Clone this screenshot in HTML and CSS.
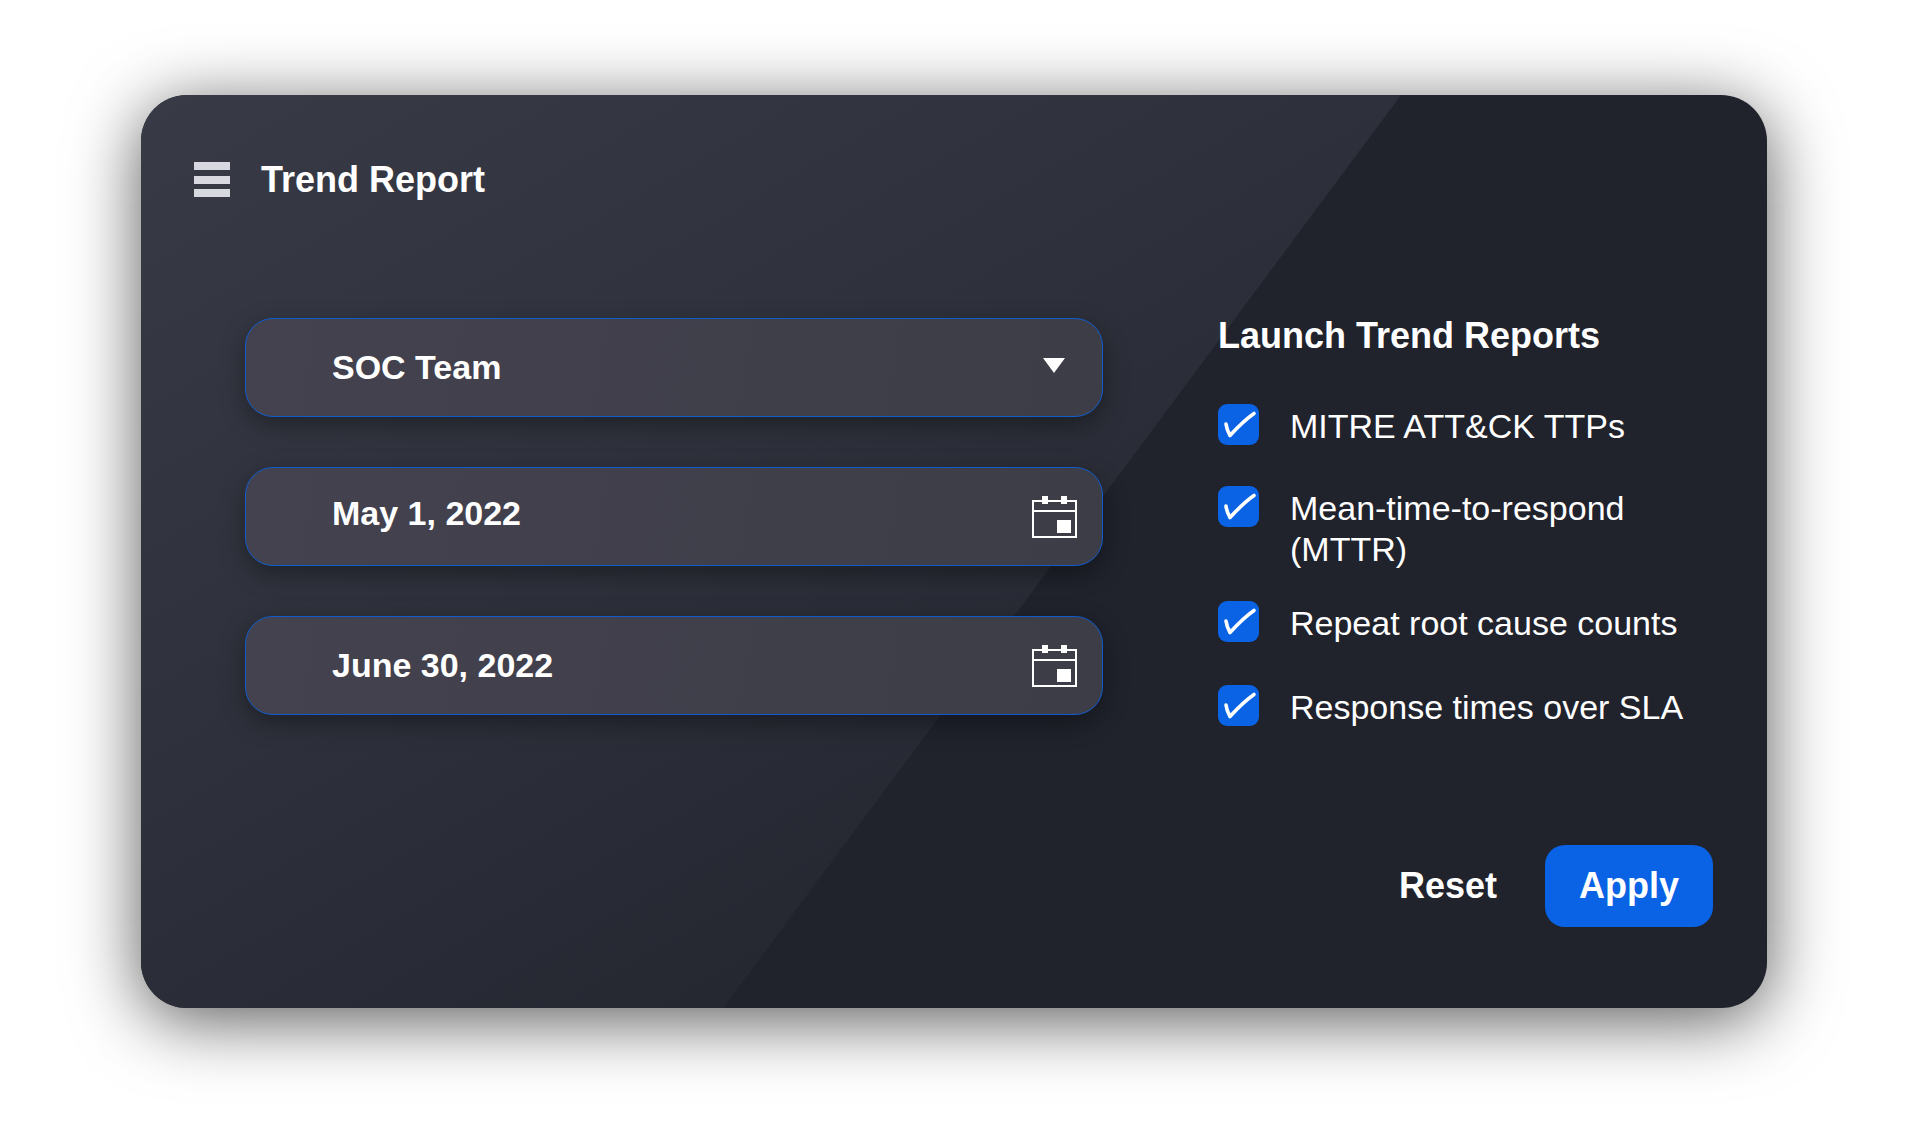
FILE: index.html
```html
<!DOCTYPE html>
<html>
<head>
    <meta charset="UTF-8">
    <title>Trend Report</title>
    <link rel="stylesheet" href="styles.css">
</head>
<body>
    <div class="card">
        <header class="card-header">
            <div class="menu-icon"><span></span><span></span><span></span></div>
            <h1>Trend Report</h1>
        </header>

        <div class="card-body">
            <div class="fields">
                <div class="field">
                    <span>SOC Team</span>
                    <span class="arrow"></span>
                </div>
                <div class="field">
                    <span class="raised">May 1, 2022</span>
                    <svg class="calendar" viewBox="0 0 45 42" width="45" height="42">
                        <rect x="1" y="5" width="43" height="36" fill="none" stroke="#fff" stroke-width="2"/>
                        <rect x="10" y="0" width="6" height="8" fill="#fff"/>
                        <rect x="29" y="0" width="6" height="8" fill="#fff"/>
                        <rect x="1" y="14" width="43" height="2" fill="#fff"/>
                        <rect x="25" y="24" width="14" height="13" fill="#fff"/>
                    </svg>
                </div>
                <div class="field">
                    <span>June 30, 2022</span>
                    <svg class="calendar" viewBox="0 0 45 42" width="45" height="42">
                        <rect x="1" y="5" width="43" height="36" fill="none" stroke="#fff" stroke-width="2"/>
                        <rect x="10" y="0" width="6" height="8" fill="#fff"/>
                        <rect x="29" y="0" width="6" height="8" fill="#fff"/>
                        <rect x="1" y="14" width="43" height="2" fill="#fff"/>
                        <rect x="25" y="24" width="14" height="13" fill="#fff"/>
                    </svg>
                </div>
            </div>

            <div class="reports">
                <h2>Launch Trend Reports</h2>
                <div class="check-row first">
                    <svg class="checkbox" viewBox="0 0 41 41" width="41" height="41">
                        <rect width="41" height="41" rx="9" fill="#0a62e4"/>
                        <path d="M8 20 C8.5 24 10 28 12 31.5 C18 25 28 15 36 9.5" fill="none" stroke="#fff" stroke-width="3.6" stroke-linecap="round" stroke-linejoin="round"/>
                    </svg>
                    <span>MITRE ATT&amp;CK TTPs</span>
                </div>
                <div class="check-row wrap">
                    <svg class="checkbox" viewBox="0 0 41 41" width="41" height="41">
                        <rect width="41" height="41" rx="9" fill="#0a62e4"/>
                        <path d="M8 20 C8.5 24 10 28 12 31.5 C18 25 28 15 36 9.5" fill="none" stroke="#fff" stroke-width="3.6" stroke-linecap="round" stroke-linejoin="round"/>
                    </svg>
                    <span>Mean-time-to-respond (MTTR)</span>
                </div>
                <div class="check-row">
                    <svg class="checkbox" viewBox="0 0 41 41" width="41" height="41">
                        <rect width="41" height="41" rx="9" fill="#0a62e4"/>
                        <path d="M8 20 C8.5 24 10 28 12 31.5 C18 25 28 15 36 9.5" fill="none" stroke="#fff" stroke-width="3.6" stroke-linecap="round" stroke-linejoin="round"/>
                    </svg>
                    <span>Repeat root cause counts</span>
                </div>
                <div class="check-row">
                    <svg class="checkbox" viewBox="0 0 41 41" width="41" height="41">
                        <rect width="41" height="41" rx="9" fill="#0a62e4"/>
                        <path d="M8 20 C8.5 24 10 28 12 31.5 C18 25 28 15 36 9.5" fill="none" stroke="#fff" stroke-width="3.6" stroke-linecap="round" stroke-linejoin="round"/>
                    </svg>
                    <span>Response times over SLA</span>
                </div>
            </div>
        </div>

        <footer class="card-footer">
            <button class="btn-reset">Reset</button>
            <button class="btn-apply">Apply</button>
        </footer>
    </div>
</body>
</html>
```

FILE: styles.css
```css
html, body {
    height: 100%;
}

body {
    box-sizing: border-box;
    margin: 0;
    padding: 95px 0 0 141px;
    background-color: #ffffff;
    color: #ffffff;
    font-family: "Liberation Sans", Arial, sans-serif;
}

.card {
    position: relative;
    box-sizing: border-box;
    display: flex;
    flex-direction: column;
    width: 1626px;
    height: 913px;
    padding: 67px 54px 81px 53px;
    border-radius: 46px;
    background-color: #20222c;
    box-shadow: 0 12px 70px rgba(0, 0, 0, 0.65);
}

/* the lighter sheet, cut along a diagonal */
.card::before {
    content: "";
    position: absolute;
    inset: 0;
    border-radius: 46px;
    background: linear-gradient(150deg, #383b46 0%, #2e313b 38%, #21232d 80%);
    clip-path: polygon(0 0, 1260px 0, 582px 913px, 0 913px);
}

.card > * {
    position: relative;
}

.card-header {
    display: flex;
    align-items: center;
    gap: 31px;
    height: 35px;
}

.card-header h1 {
    margin: 0;
    font-size: 36px;
    font-weight: bold;
}

.menu-icon {
    display: flex;
    flex-direction: column;
    justify-content: space-between;
    width: 36px;
    height: 35px;
}

.menu-icon span {
    height: 8px;
    background-color: #d8d9e0;
}

.card-body {
    display: flex;
    gap: 115px;
    margin-top: 121px;
    margin-left: 51px;
}

.fields {
    display: flex;
    flex-direction: column;
    gap: 50px;
    width: 858px;
}

.field {
    box-sizing: border-box;
    display: flex;
    align-items: center;
    justify-content: space-between;
    height: 99px;
    padding: 0 25px 0 86px;
    border: 1.5px solid #0f5ccf;
    border-radius: 28px;
    background: linear-gradient(100deg, #43424e, #3d3d48);
    box-shadow: 0 8px 24px rgba(0, 0, 0, 0.35);
    font-size: 34px;
    font-weight: bold;
}

.raised {
    margin-bottom: 6px;
}

.arrow {
    width: 0;
    height: 0;
    margin-right: 12px;
    margin-bottom: 4px;
    border-left: 11px solid transparent;
    border-right: 11px solid transparent;
    border-top: 15px solid #ffffff;
}

.reports {
    flex: 1;
}

.reports h2 {
    margin: -3px 0 0 0;
    font-size: 36px;
    line-height: 42px;
    font-weight: bold;
}

.check-row {
    display: flex;
    align-items: flex-start;
    gap: 31px;
    margin-bottom: 41px;
    font-size: 34px;
    line-height: 41px;
}

.check-row span {
    padding-top: 2px;
}

.check-row.first {
    margin-top: 47px;
    margin-bottom: 39px;
}

.check-row.wrap {
    margin-bottom: 31px;
}

.checkbox {
    flex-shrink: 0;
}

.card-footer {
    display: flex;
    align-items: center;
    justify-content: flex-end;
    gap: 48px;
    margin-top: auto;
}

.card-footer button {
    border: 0;
    color: #ffffff;
    font-family: inherit;
    font-size: 36px;
    font-weight: bold;
}

.btn-reset {
    background: none;
    padding: 0;
}

.btn-apply {
    width: 168px;
    height: 82px;
    border-radius: 20px;
    background-color: #0a62e4;
}
```
